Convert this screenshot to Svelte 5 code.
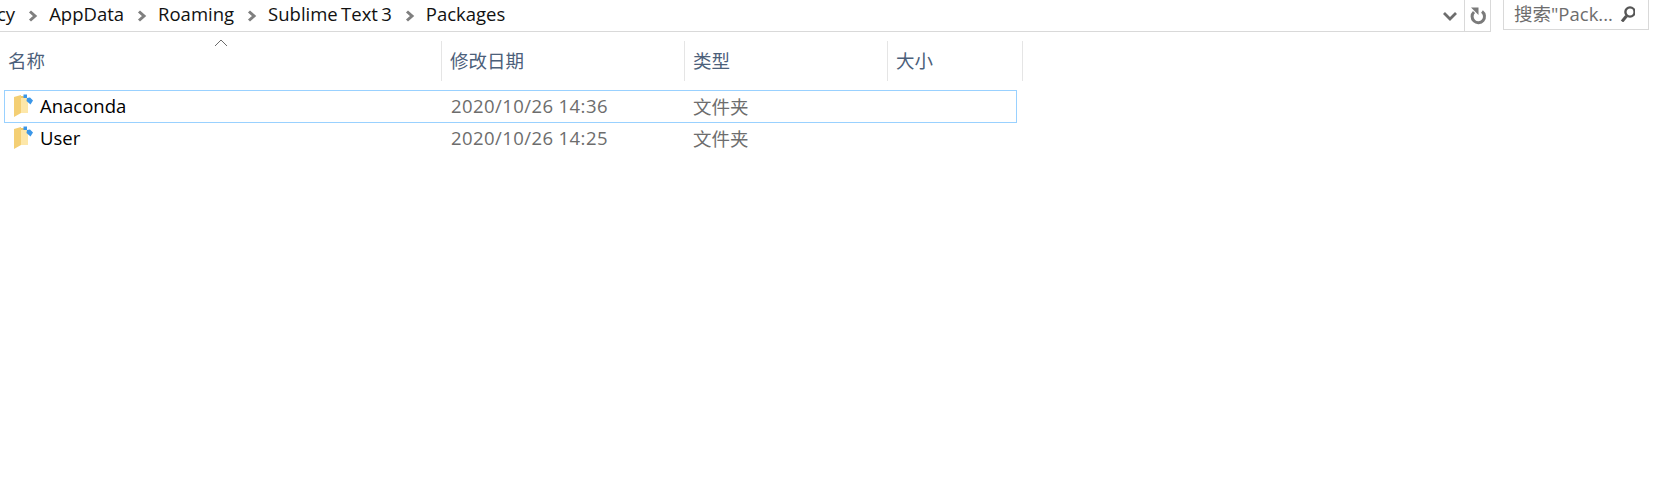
<script>
  const crumbs = ['AppData', 'Roaming', 'Sublime Text 3', 'Packages'];
  const columns = [
    { label: '名称', width: 442 },
    { label: '修改日期', width: 243 },
    { label: '类型', width: 203 },
    { label: '大小', width: 135 }
  ];
  const rows = [
    { name: 'Anaconda', date: '2020/10/26 14:36', type: '文件夹', selected: true },
    { name: 'User', date: '2020/10/26 14:25', type: '文件夹', selected: false }
  ];
</script>

{#snippet chevron()}
  <svg class="chev" width="10" height="14" viewBox="0 0 10 14"><path d="M2 2.5 L7 7 L2 11.5" fill="none" stroke="#7f7f7f" stroke-width="3"/></svg>
{/snippet}

{#snippet folder()}
  <svg class="folder" width="20" height="24" viewBox="0 0 20 24">
    <path d="M0 3 L7 1 V19 L0 23 Z" fill="#f4cf74"/>
    <path d="M7 4 H14 V19 H7 Z" fill="#fde7a9"/>
    <path d="M7 2 H11 V4 H7 Z" fill="#eec869"/>
    <path d="M9.5 0.5 H13 V4 H9.5 Z" fill="#3a96e8"/>
    <path d="M13 4 L16 3.5 L19 6.5 L16.5 10.5 L12.5 7 Z" fill="#3a96e8"/>
  </svg>
{/snippet}

<div class="page">
  <div class="top">
    <div class="address">
      <div class="crumbs">
        <span class="clip">cy</span>
        {#each crumbs as crumb}
          {@render chevron()}
          <span class="crumb">{crumb}</span>
        {/each}
      </div>
      <svg class="drop" width="16" height="10" viewBox="0 0 16 10"><path d="M2 2 L8 8 L14 2" fill="none" stroke="#6d6d6d" stroke-width="2.8"/></svg>
      <div class="refresh">
        <svg width="20" height="20" viewBox="0 0 20 20">
          <path d="M6 6 A6.2 6.2 0 1 0 14 5.5" fill="none" stroke="#7a7a7a" stroke-width="3"/>
          <polygon points="3,1.5 10.5,1.5 10.5,9" fill="#7a7a7a"/>
        </svg>
      </div>
    </div>
    <div class="search">
      <span class="placeholder">搜索"Pack...</span>
      <svg width="18" height="18" viewBox="0 0 18 18">
        <circle cx="13" cy="8" r="4.6" fill="none" stroke="#555" stroke-width="2.4"/>
        <path d="M9.5 12 L5 17.5" stroke="#555" stroke-width="3"/>
      </svg>
    </div>
  </div>

  <div class="table">
    <div class="head">
      {#each columns as col, i}
        <div class="th" style="width:{col.width}px">
          {#if i === 0}
            <svg class="sort" width="14" height="8" viewBox="0 0 14 8"><path d="M1 7 L7 1 L13 7" fill="none" stroke="#6b6b6b" stroke-width="1"/></svg>
          {/if}
          <span class="label">{col.label}</span>
        </div>
      {/each}
    </div>
    <div class="rows">
      {#each rows as row}
        <div class="row" class:selected={row.selected}>
          <div class="name">
            {@render folder()}
            <span>{row.name}</span>
          </div>
          <div class="date">{row.date}</div>
          <div class="type">{row.type}</div>
        </div>
      {/each}
    </div>
  </div>
</div>

<style>
  :global(body) {
    margin: 0;
    background: #fff;
  }
  .page {
    width: 1663px;
    height: 483px;
    overflow: hidden;
    background: #fff;
    font-family: "Open Sans", "Noto Sans CJK SC", sans-serif;
    font-size: 18.5px;
    color: #000;
  }
  .top {
    display: flex;
    align-items: flex-start;
    height: 32px;
  }
  .address {
    flex: none;
    width: 1490px;
    height: 31px;
    border-bottom: 1px solid #d9d9d9;
    border-right: 1px solid #d9d9d9;
    display: flex;
    align-items: center;
  }
  .crumbs {
    flex: 1;
    display: flex;
    align-items: center;
    gap: 12px;
    height: 28px;
    margin-top: -5px;
    overflow: hidden;
    white-space: nowrap;
    color: #111;
  }
  .clip {
    margin-left: -3px;
  }
  .chev {
    flex: none;
    margin: 6px -1px 0 1px;
  }
  .crumb {
    word-spacing: -1.5px;
  }
  .drop {
    margin-right: 6px;
  }
  .refresh {
    width: 25px;
    height: 31px;
    border-left: 1px solid #d9d9d9;
    display: flex;
    align-items: center;
    justify-content: center;
  }
  .search {
    margin-left: 12px;
    width: 146px;
    height: 30px;
    border: 1px solid #d9d9d9;
    border-top: none;
    display: flex;
    align-items: center;
    justify-content: space-between;
    padding: 0 13px 3px 10px;
    box-sizing: border-box;
    color: #6d6d6d;
  }
  .table {
    width: 1024px;
  }
  .head {
    display: flex;
    margin-top: 9px;
    height: 40px;
  }
  .th {
    position: relative;
    box-sizing: border-box;
    padding-left: 8px;
    border-right: 1px solid #e5e5e5;
    display: flex;
    align-items: center;
    color: #4c607a;
  }
  .label {
    margin-top: -2px;
  }
  .sort {
    position: absolute;
    left: 214px;
    top: -2px;
  }
  .rows {
    margin-top: 9px;
    margin-left: 4px;
    width: 1013px;
  }
  .row {
    display: flex;
    align-items: center;
    height: 33px;
    margin-bottom: -1px;
    padding-bottom: 2px;
    box-sizing: border-box;
    border: 1px solid transparent;
  }
  .row.selected {
    border-color: #99d1ff;
  }
  .name {
    width: 446px;
    display: flex;
    align-items: center;
    gap: 6px;
    padding-left: 9px;
    box-sizing: border-box;
  }
  .date {
    width: 242px;
    color: #6d6d6d;
    letter-spacing: 0.42px;
  }
  .type {
    color: #6d6d6d;
  }
</style>
